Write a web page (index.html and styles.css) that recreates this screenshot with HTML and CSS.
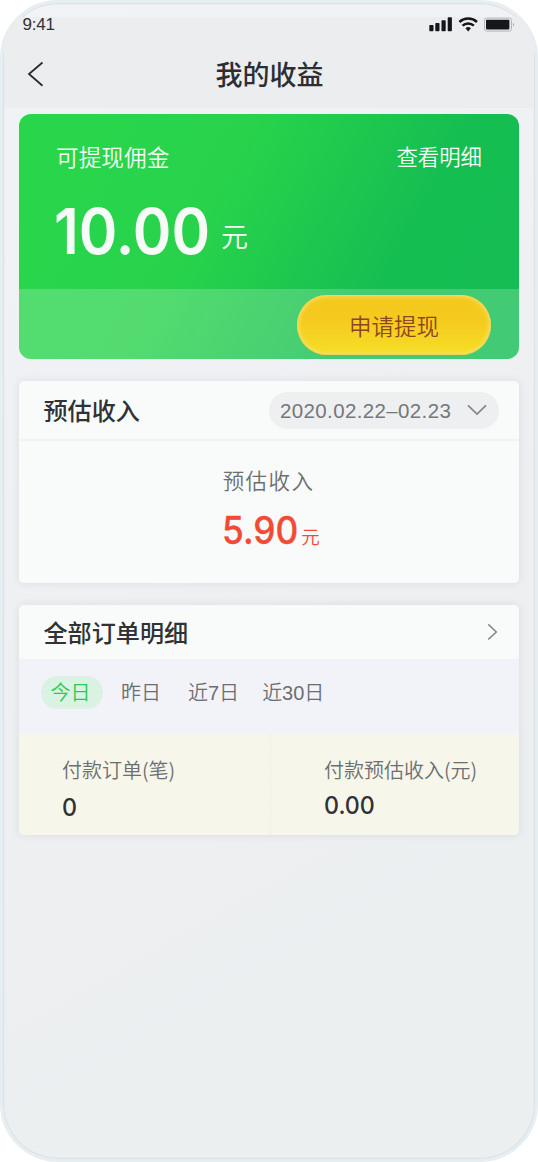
FILE: index.html
```html
<!DOCTYPE html>
<html lang="zh-CN">
<head>
<meta charset="utf-8">
<title>我的收益</title>
<link rel="stylesheet" href="styles.css">
</head>
<body>
<div class="phone">
  <header class="header">
    <div class="status">
      <span class="time">9:41</span>
      <svg class="status-icons" width="86" height="16" viewBox="0 0 86 16">
        <g fill="#15171c">
          <rect x="0.3" y="8" width="4.2" height="6.2" rx="0.8"/>
          <rect x="6.3" y="6" width="4.2" height="8.2" rx="0.8"/>
          <rect x="12.5" y="3.3" width="4.2" height="10.9" rx="0.8"/>
          <rect x="18.7" y="0.3" width="4.2" height="13.9" rx="0.8"/>
          <path d="M36.5 11.2a4.2 4.2 0 0 1 5.4 0L39.2 14.4z"/>
        </g>
        <g fill="none" stroke="#15171c" stroke-width="2.4">
          <path d="M30.4 5a13 13 0 0 1 17.6 0"/>
          <path d="M33.5 8.7a8.3 8.3 0 0 1 11.4 0"/>
        </g>
        <rect x="55.5" y="1.1" width="27" height="13" rx="2.2" fill="none" stroke="#b4b5b8"/>
        <rect x="57" y="2.7" width="23.4" height="9.7" rx="0.8" fill="#15171c"/>
        <path d="M84 5.5a2.5 2.5 0 0 1 0 4z" fill="#a4a5a8"/>
      </svg>
    </div>
    <div class="nav">
      <svg class="back" width="20" height="28" viewBox="0 0 20 28"><path d="M16.5 2.5 3 14 16.5 25.8" fill="none" stroke="#2a2c30" stroke-width="1.8"/></svg>
      <h1 class="title">我的收益</h1>
    </div>
  </header>
  <main class="content">
    <section class="balance">
      <div class="balance-main">
        <div class="balance-top"><span class="balance-label">可提现佣金</span><span class="balance-link">查看明细</span></div>
        <div class="amount"><span class="amount-num">10.00</span><span class="amount-unit">元</span></div>
      </div>
      <div class="balance-foot"><button class="withdraw">申请提现</button></div>
    </section>
    <section class="card income">
      <div class="income-head">
        <h2 class="heading">预估收入</h2>
        <div class="range"><span>2020.02.22–02.23</span><svg width="20" height="12" viewBox="0 0 20 12"><path d="M1 .3 10 9 19 .3" fill="none" stroke="#85878a" stroke-width="1.7"/></svg></div>
      </div>
      <div class="income-label">预估收入</div>
      <div class="income-value"><span class="income-num">5.90</span><span class="income-unit">元</span></div>
    </section>
    <section class="card orders">
      <div class="orders-head">
        <h2 class="heading">全部订单明细</h2>
        <svg width="11" height="18" viewBox="0 0 11 18"><path d="M1.3 1.4 9.3 9 1.3 16.4" fill="none" stroke="#85878a" stroke-width="1.5"/></svg>
      </div>
      <div class="tabs"><span class="tab active">今日</span><span class="tab yesterday">昨日</span><span class="tab week">近7日</span><span class="tab">近30日</span></div>
      <div class="stats">
        <div class="stat"><span class="stat-label">付款订单(笔)</span><span class="stat-value zero">0</span></div>
        <div class="stat right"><span class="stat-label">付款预估收入(元)</span><span class="stat-value">0.00</span></div>
      </div>
    </section>
  </main>
</div>
</body>
</html>
```
FILE: styles.css
```css
* { box-sizing: border-box; }
body { margin: 0; background: #fff; font-family: "Liberation Sans", "Noto Sans CJK SC", sans-serif; }
h1, h2 { margin: 0; font-weight: 500; font-family: "Noto Sans CJK SC", sans-serif; }
svg { display: block; }
.phone {
  width: 538px; height: 1162px; padding-top: 14px; overflow: hidden;
  border: 3px solid #e7eef1; border-radius: 58px;
  background: linear-gradient(150deg, #f2f3f6 0%, #eeeff1 55%, #ebeff0 85%) border-box;
  box-shadow: inset 0 0 0 1.2px #dae2e7;
}
.header { height: 91px; margin: 0 1px; padding: 0 20px 0 18px; background: #ecedef; }
.status { height: 16px; display: flex; justify-content: space-between; }
.time { font-size: 17px; line-height: 15px; letter-spacing: -0.2px; color: #303236; padding-left: 0.5px; }
.status-icons { margin-right: -1px; }
.nav { display: grid; grid-template-columns: 20px 1fr 20px; align-items: center; height: 75px; }
.back { margin: 6px 0 0 4px; }
.title { text-align: center; font-size: 27px; line-height: 40px; color: #2c2e32; padding: 6px 0 0 3px; }
.content { padding: 6px 16px 0; display: flex; flex-direction: column; }
.balance { height: 245px; border-radius: 12px; overflow: hidden; background: linear-gradient(118deg, #29d64b 0%, #28d34b 38%, #15be51 72%, #15bd52 100%); color: #f7fbf8; }
.balance-main { height: 175px; padding: 27px 37px 0; font-family: "Noto Sans CJK SC", sans-serif; }
.balance-top { display: flex; justify-content: space-between; height: 34px; line-height: 32px; }
.balance-label { font-size: 22.7px; font-weight: 350; }
.balance-link { font-size: 21.4px; font-weight: 350; line-height: 30px; }
.amount { display: flex; align-items: flex-start; margin: 16px 0 0 -2px; }
.amount-num { font: 600 63px/80px Inter, sans-serif; transform: scaleX(.93); transform-origin: left; }
.amount-unit { font-size: 27px; line-height: 40px; font-weight: 350; margin: 25px 0 0 -1px; }
.balance-foot { height: 70px; padding: 6px 28px 0 0; display: flex; justify-content: flex-end; background: rgba(255,255,255,.2); }
.withdraw {
  width: 194px; height: 60px; border: 0; padding: 0; border-radius: 30px; color: #8c4620;
  font: 350 22.5px/60px "Noto Sans CJK SC", sans-serif;
  background: linear-gradient(#f4c91c, #f5ca1e 40%, #f5df26);
  box-shadow: inset 0 0 5px 1px rgba(250,232,140,.85), inset 0 -1px 1px #e3b938;
}
.card { border-radius: 5px; background: #f9fbfa; overflow: hidden; box-shadow: 0 0 9px rgba(50,60,80,.1); }
.heading { font-size: 24.1px; line-height: 36px; color: #303236; }
.income { margin-top: 22px; height: 202px; }
.income-head { height: 60px; padding: 0 20px 0 24.5px; display: flex; justify-content: space-between; align-items: center; border-bottom: 2px solid #f1f2f3; }
.range { width: 230px; height: 37px; padding: 1px 12px 0 11px; border-radius: 19px; background: #eeeff0; display: flex; align-items: center; justify-content: space-between; font-size: 20.5px; letter-spacing: .37px; color: #75777a; }
.income-label { text-align: center; font: 350 21.5px/32px "Noto Sans CJK SC", sans-serif; letter-spacing: 1.4px; color: #6c6e71; margin-top: 23px; padding-right: 1px; }
.income-value { display: flex; justify-content: center; align-items: baseline; color: #f14b36; height: 50px; margin-top: 10px; padding-left: 4px; }
.income-num { font: 500 38px/48px Inter, sans-serif; transform: scaleX(.93); transform-origin: left; -webkit-text-stroke: .3px #f14b36; }
.income-unit { font: 350 18.5px/46px "Noto Sans CJK SC", sans-serif; margin-left: -3px; }
.orders { margin-top: 22px; height: 230px; }
.orders-head { height: 54px; padding: 0 21px 0 24.5px; display: flex; align-items: center; justify-content: space-between; }
.tabs { height: 75px; padding: 17px 22px 0; display: flex; background: #f2f3f9; font: 350 20px/35px "Liberation Sans", "Noto Sans CJK SC", sans-serif; color: #6c6e71; }
.active { width: 62px; height: 33px; border-radius: 17px; text-align: center; background: #daf2e1; color: #26cb50; margin-right: 18px; padding-right: 3px; }
.yesterday { margin-right: 27px; }
.week { margin-right: 23px; }
.stats { height: 101px; display: grid; grid-template-columns: 251px 1fr; background: #f6f6eb; }
.stat { display: flex; flex-direction: column; padding: 21px 0 0 43px; }
.right { padding-left: 53px; border-left: 1px dashed #ececed; }
.stat-label { font: 350 20px/30px "Noto Sans CJK SC", sans-serif; color: #6c6e71; }
.stat-value { font: 500 24.5px/30px Inter, sans-serif; color: #303236; margin-top: 5px; transform: scaleX(.95); transform-origin: left; }
.zero { margin-top: 7px; }
```
